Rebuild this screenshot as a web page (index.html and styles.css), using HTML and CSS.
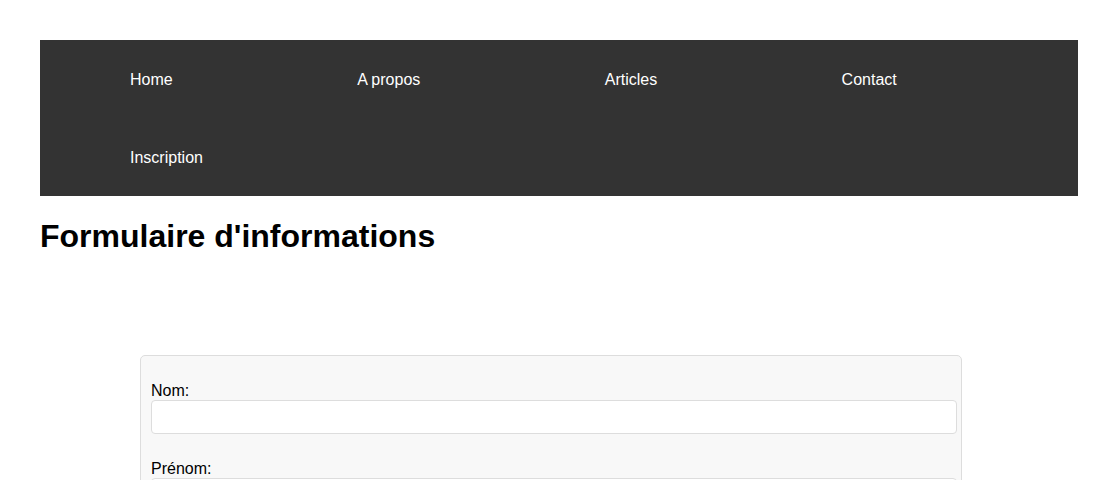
FILE: index.html
```html
<!DOCTYPE html>
<html lang="fr">
<head>
<meta charset="utf-8">
<title>Formulaire d'informations</title>
<link rel="stylesheet" href="styles.css">
</head>
<body>
<nav class="nav">
  <ul class="nav-list">
    <li class="nav-item"><a class="nav-link" href="#">Home</a></li>
    <li class="nav-item"><a class="nav-link" href="#">A propos</a></li>
    <li class="nav-item"><a class="nav-link" href="#">Articles</a></li>
    <li class="nav-item"><a class="nav-link" href="#">Contact</a></li>
    <li class="nav-item"><a class="nav-link" href="#">Inscription</a></li>
  </ul>
</nav>
<h1 class="title">Formulaire d'informations</h1>
<form class="form">
  <div class="field">
    <label class="label" for="nom">Nom:</label>
    <input class="input" id="nom" type="text">
  </div>
  <div class="field">
    <label class="label" for="prenom">Prénom:</label>
    <input class="input" id="prenom" type="text">
  </div>
  <div class="field">
    <label class="label" for="email">Email:</label>
    <input class="input" id="email" type="text">
  </div>
</form>
</body>
</html>
```
FILE: styles.css
```css
body {
  margin: 40px;
  font-family: "Liberation Sans", Arial, sans-serif;
  font-size: 16px;
  color: #000;
  background: #fff;
}
.nav {
  background: #333;
}
.nav-list {
  list-style: none;
  margin: 0;
  padding: 0;
  display: flex;
  flex-wrap: wrap;
  column-gap: 4.45px;
}
.nav-item {
  padding: 31px 90px 29px;
  line-height: 18px;
}
.nav-link {
  color: #fff;
  text-decoration: none;
}
.title {
  font-size: 32px;
  margin: 22.44px 0 21.44px;
}
.form {
  width: 800px;
  margin: 100px;
  padding: 10px;
  background: #f8f8f8;
  border: 1px solid #ddd;
  border-radius: 5px;
}
.field {
  margin: 16px 0;
  padding-bottom: 10px;
}
.label {
  display: block;
  line-height: 18px;
}
.input {
  display: block;
  box-sizing: border-box;
  width: calc(100% + 6px);
  height: 34px;
  margin: 0;
  padding: 8px;
  border: 1px solid #ddd;
  border-radius: 4px;
  background: #fff;
  font-family: inherit;
  font-size: 14px;
}
```
